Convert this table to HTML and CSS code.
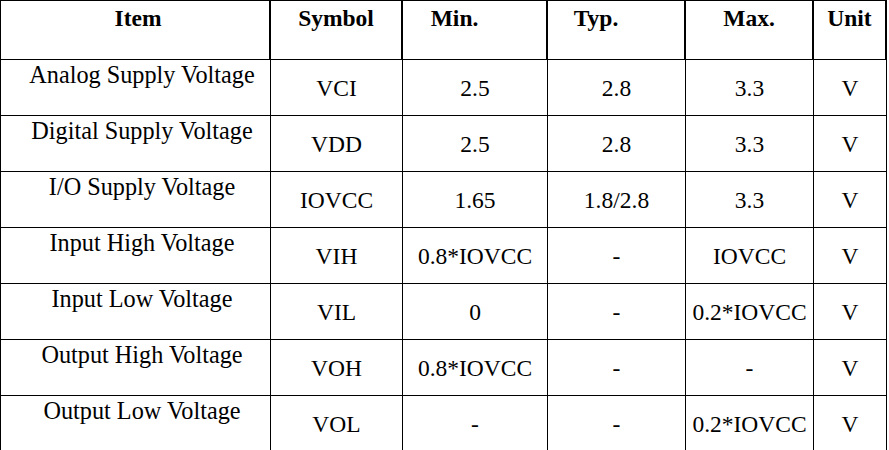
FILE: index.html
```html
<!DOCTYPE html>
<html lang="en">
<head>
<meta charset="utf-8">
<title>Electrical Characteristics</title>
<link rel="stylesheet" href="styles.css">
</head>
<body>
<div class="spec" role="table">
  <div class="row head" role="row">
    <div class="cell item" role="columnheader">Item</div>
    <div class="cell" role="columnheader">Symbol</div>
    <div class="cell shift" role="columnheader">Min.</div>
    <div class="cell shift" role="columnheader">Typ.</div>
    <div class="cell" role="columnheader">Max.</div>
    <div class="cell" role="columnheader">Unit</div>
  </div>
  <div class="row" role="row">
    <div class="cell item" role="cell">Analog Supply Voltage</div>
    <div class="cell" role="cell">VCI</div>
    <div class="cell" role="cell">2.5</div>
    <div class="cell" role="cell">2.8</div>
    <div class="cell" role="cell">3.3</div>
    <div class="cell" role="cell">V</div>
  </div>
  <div class="row" role="row">
    <div class="cell item" role="cell">Digital Supply Voltage</div>
    <div class="cell" role="cell">VDD</div>
    <div class="cell" role="cell">2.5</div>
    <div class="cell" role="cell">2.8</div>
    <div class="cell" role="cell">3.3</div>
    <div class="cell" role="cell">V</div>
  </div>
  <div class="row" role="row">
    <div class="cell item" role="cell">I/O Supply Voltage</div>
    <div class="cell" role="cell">IOVCC</div>
    <div class="cell" role="cell">1.65</div>
    <div class="cell" role="cell">1.8/2.8</div>
    <div class="cell" role="cell">3.3</div>
    <div class="cell" role="cell">V</div>
  </div>
  <div class="row" role="row">
    <div class="cell item" role="cell">Input High Voltage</div>
    <div class="cell" role="cell">VIH</div>
    <div class="cell" role="cell">0.8*IOVCC</div>
    <div class="cell" role="cell">-</div>
    <div class="cell" role="cell">IOVCC</div>
    <div class="cell" role="cell">V</div>
  </div>
  <div class="row" role="row">
    <div class="cell item" role="cell">Input Low Voltage</div>
    <div class="cell" role="cell">VIL</div>
    <div class="cell" role="cell">0</div>
    <div class="cell" role="cell">-</div>
    <div class="cell" role="cell">0.2*IOVCC</div>
    <div class="cell" role="cell">V</div>
  </div>
  <div class="row" role="row">
    <div class="cell item" role="cell">Output High Voltage</div>
    <div class="cell" role="cell">VOH</div>
    <div class="cell" role="cell">0.8*IOVCC</div>
    <div class="cell" role="cell">-</div>
    <div class="cell" role="cell">-</div>
    <div class="cell" role="cell">V</div>
  </div>
  <div class="row last" role="row">
    <div class="cell item" role="cell">Output Low Voltage</div>
    <div class="cell" role="cell">VOL</div>
    <div class="cell" role="cell">-</div>
    <div class="cell" role="cell">-</div>
    <div class="cell" role="cell">0.2*IOVCC</div>
    <div class="cell" role="cell">V</div>
  </div>
</div>
</body>
</html>
```

FILE: styles.css
```css
html, body {
  margin: 0;
  padding: 0;
  overflow: hidden;
  background: #ffffff;
}

.spec {
  width: 887px;
  box-sizing: border-box;
  border-left: 1px solid #000;
  border-top: 1px solid #000;
  font-family: "Liberation Serif", "Times New Roman", serif;
  font-size: 23.5px;
  line-height: 27px;
  color: #000;
}

.row {
  display: grid;
  grid-template-columns: 270px 132px 145px 138px 128px 73px;
  height: 56px;
}

.row.head {
  height: 59px;
  font-weight: bold;
}

.row.last {
  height: 60px;
}

.cell {
  box-sizing: border-box;
  border-right: 1px solid #000;
  border-bottom: 1px solid #000;
  text-align: center;
  padding-top: 14.5px;
  white-space: nowrap;
}

.cell.item {
  font-size: 24.25px;
  padding-top: 0.5px;
  padding-left: 13px;
}

.head .cell {
  border-right-width: 2px;
  padding-top: 4px;
}

.head .cell.item {
  font-size: 23.5px;
  padding-left: 6px;
}

.head .cell.shift {
  padding-right: 40px;
}

.last .cell {
  border-bottom: none;
}
```
